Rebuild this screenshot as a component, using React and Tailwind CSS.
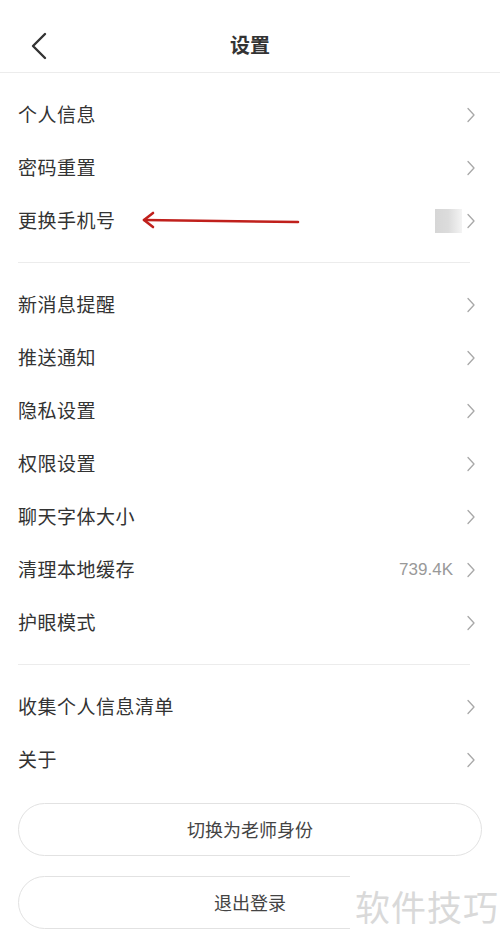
import React from 'react';

const Chevron = () => (
  <svg width="10" height="16" viewBox="0 0 10 16" className="shrink-0">
    <path d="M2 1.5 L8 8 L2 14.5" fill="none" stroke="#a8a8a8" strokeWidth="1.3" strokeLinecap="round" strokeLinejoin="round" />
  </svg>
);

const Row = ({ label, value, children }) => (
  <div className="relative flex items-center h-[53px] pl-[18px] pr-[24px]">
    <span className="text-[19px] text-[#333] tracking-[0.5px]">{label}</span>
    <div className="flex-1" />
    {value && <span className="text-[17px] text-[#999] mr-[13px] font-['Liberation_Sans',sans-serif]">{value}</span>}
    {children}
    <Chevron />
  </div>
);

const Divider = () => <div className="ml-[18px] mr-[30px] h-px bg-[#ececec]" />;

export default function App() {
  const group1 = ['个人信息', '密码重置'];
  const group2 = ['新消息提醒', '推送通知', '隐私设置', '权限设置', '聊天字体大小'];

  return (
    <div className="relative w-[500px] h-[949px] bg-white overflow-hidden font-['Noto_Sans_CJK_SC','Noto_Sans',sans-serif]">
      {/* header */}
      <div className="relative flex items-center justify-center h-[73px] pt-[18px] border-b border-[#ececec]">
        <svg width="18" height="28" viewBox="0 0 18 28" className="absolute left-[30px] top-[32px]">
          <path d="M15 2 L3 14 L15 26" fill="none" stroke="#333" strokeWidth="2.4" strokeLinecap="round" strokeLinejoin="round" />
        </svg>
        <span className="text-[20px] font-bold text-[#333]">设置</span>
      </div>

      <div className="pt-[15px]">
        {group1.map((l) => <Row key={l} label={l} />)}
        <Row label="更换手机号">
          <div className="w-[27px] h-[24px] mr-[4px] bg-gradient-to-r from-[#d6d6d6] via-[#dcdcdc] to-[#f4f4f4] blur-[0.5px]" />
          <svg width="160" height="20" viewBox="0 0 160 20" className="absolute left-[140px] top-[16px]">
            <path d="M4 10 L158 12" stroke="#c0201c" strokeWidth="2.6" strokeLinecap="round" />
            <path d="M13 3 L4 10 L13 17" fill="none" stroke="#c0201c" strokeWidth="2.6" strokeLinecap="round" strokeLinejoin="round" />
          </svg>
        </Row>
      </div>

      <div className="py-[15px]"><Divider /></div>

      <div>
        {group2.map((l) => <Row key={l} label={l} />)}
        <Row label="清理本地缓存" value="739.4K" />
        <Row label="护眼模式" />
      </div>

      <div className="py-[15px]"><Divider /></div>

      <div>
        <Row label="收集个人信息清单" />
        <Row label="关于" />
      </div>

      <div className="px-[18px] pt-[17px] flex flex-col gap-[20px]">
        <div className="h-[53px] rounded-full border border-[#e2e2e2] flex items-center justify-center text-[18px] text-[#444]">切换为老师身份</div>
        <div className="h-[53px] rounded-full border border-[#e2e2e2] flex items-center justify-center text-[18px] text-[#444]">退出登录</div>
      </div>

      {/* watermark */}
      <div className="absolute left-[350px] top-[876px] w-[150px] h-[73px] bg-white flex items-start pt-[12px] pl-[5px]">
        <span className="text-[35px] leading-none text-[#d9d9d9] tracking-[1px]">软件技巧</span>
      </div>
    </div>
  );
}
